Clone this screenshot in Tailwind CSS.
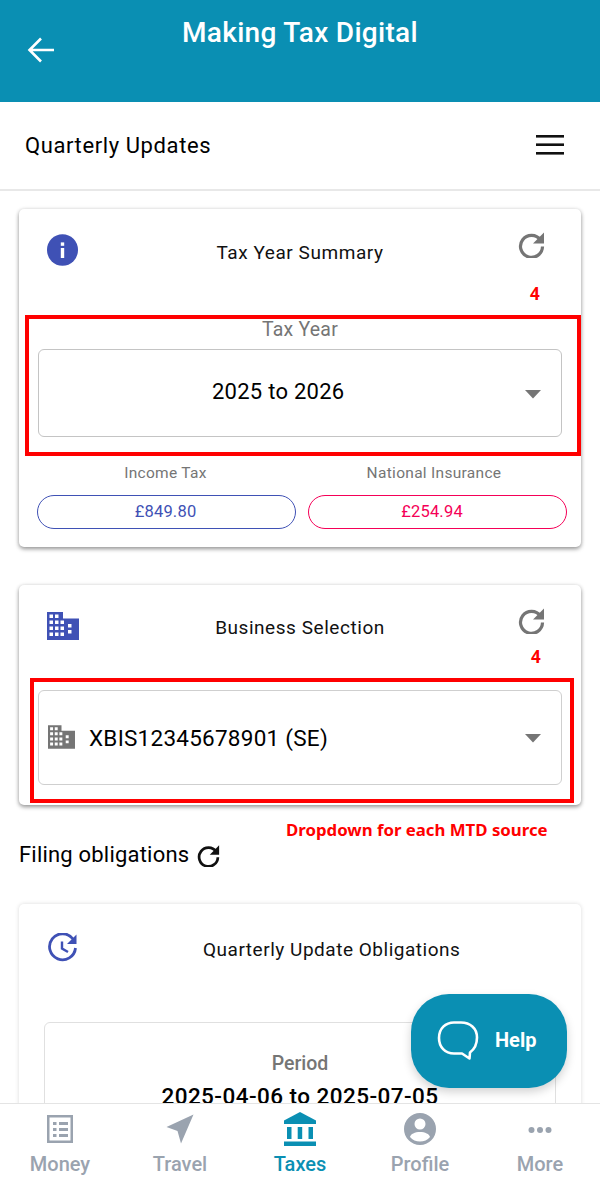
<!DOCTYPE html>
<html lang="en">
<head>
<meta charset="utf-8">
<script src="https://cdn.jsdelivr.net/npm/@tailwindcss/browser@4"></script>
<title>Making Tax Digital</title>
</head>
<body class="bg-white">
<div class="relative w-[600px] h-[1180px] overflow-hidden bg-white font-['Roboto',sans-serif] text-black">

  <header class="h-[102px] bg-[#0a8fb3] relative flex justify-center">
    <svg class="absolute left-[26px] top-[35px] w-[30px] h-[30px]" viewBox="0 0 30 30" fill="none" stroke="#fff" stroke-width="2.6"><path d="M28 15H4M15 3.500 3.500 15 15 26.500"/></svg>
    <h1 class="text-[28px] leading-[32px] font-medium tracking-[0.3px] text-white mt-[17px]">Making Tax Digital</h1>
  </header>

  <div class="h-[90px] border-b-2 border-[#e8e8e8] rounded-t-[4px] -mt-px bg-white flex items-center justify-between pl-[25px] pr-[36px]">
    <span class="text-[22px] tracking-[0.6px]">Quarterly Updates</span>
    <svg class="w-[28px] h-[20px]" viewBox="0 0 28 20" fill="#111"><rect y="0" width="28" height="2.6"/><rect y="8.400" width="28" height="2.6"/><rect y="17" width="28" height="2.6"/></svg>
  </div>

  <main class="px-[19px] pt-[18px]">
    <section class="h-[338px] bg-white rounded-[5px] shadow-[0_2px_4px_rgba(0,0,0,0.4),0_0_4px_rgba(0,0,0,0.08)] px-[18px] flex flex-col">
      <div class="h-[88px] relative flex justify-center">
        <svg class="absolute left-[10px] top-[25px] w-[31px] h-[32px]" viewBox="0 0 31 32"><ellipse cx="15.500" cy="16" rx="15.500" ry="15.800" fill="#3f51b5"/><rect x="13.800" y="14" width="3.400" height="10" fill="#fff"/><rect x="13.800" y="8.400" width="3.400" height="3.400" fill="#fff"/></svg>
        <h2 class="text-[19px] tracking-[0.55px] leading-[24px] mt-[32px] text-[#111]">Tax Year Summary</h2>
        <svg class="absolute right-[18px] top-[22px] w-[27px] h-[27px]" viewBox="0 0 27 27" fill="none"><path d="M22.500 9A11 11 0 1 0 24.500 15.500" stroke="#757575" stroke-width="3.200"/><path d="M26 1.500V12.500H15Z" fill="#757575"/></svg>
      </div>
      <div class="text-center text-[19.500px] leading-[24px] tracking-[0.2px] text-[#757575] mt-[21px]">Tax Year</div>
      <div class="h-[88px] mt-[7px] mx-px border border-[#c4c4c4] rounded-[6px] relative flex items-center">
        <span class="text-[22px] tracking-[0.25px] ml-[173px] -mt-[4px]">2025 to 2026</span>
        <svg class="absolute right-[20px] top-[39px] w-[16px] h-[10px]" viewBox="0 0 16 10"><path d="M0 1H16L8 9.500Z" fill="#757575"/></svg>
      </div>
      <div class="grid grid-cols-2 gap-x-[12px] w-[530px] mt-[26px]">
        <div class="flex flex-col items-center">
          <span class="text-[15.500px] leading-[20px] tracking-[0.3px] text-[#757575] -ml-[2px]">Income Tax</span>
          <span class="w-full h-[34px] mt-[12px] border border-[#3f51b5] rounded-full flex items-center justify-center text-[16.500px] tracking-[0.2px] text-[#3f51b5] pr-[2px]">£849.80</span>
        </div>
        <div class="flex flex-col items-center">
          <span class="text-[15.500px] leading-[20px] tracking-[0.3px] text-[#757575] -ml-[7px]">National Insurance</span>
          <span class="w-full h-[34px] mt-[12px] border border-[#f50057] rounded-full flex items-center justify-center text-[16.500px] tracking-[0.2px] text-[#f50057] pr-[11px]">£254.94</span>
        </div>
      </div>
    </section>

    <section class="h-[220px] mt-[38px] bg-white rounded-[5px] shadow-[0_2px_4px_rgba(0,0,0,0.4),0_0_4px_rgba(0,0,0,0.08)] px-[18px] flex flex-col">
      <div class="h-[105px] relative flex justify-center">
        <svg class="absolute left-[9.500px] top-[27px] w-[32px] h-[28px]" viewBox="0 0 32 28" fill="#3f51b5" fill-rule="evenodd"><path d="M0 0H16V6.500H32V28H0ZM2.500 2.500v3.500h3.500V2.500ZM8 2.500v3.500h3.500V2.500ZM2.500 8.500v3.500h3.500V8.500ZM8 8.500v3.500h3.500V8.500ZM2.500 14.500v3.500h3.500v-3.500ZM8 14.500v3.500h3.500v-3.500ZM2.500 20.500v3.500h3.500v-3.500ZM8 20.500v3.500h3.500v-3.500ZM13.500 8.500v3.500h3.500V8.500ZM13.500 14.500v3.500h3.500v-3.500ZM13.500 20.500v3.500h3.500v-3.500ZM21 12v3.500h3.500V12ZM21 18v3.500h3.500V18Z"/></svg>
        <h2 class="text-[19px] tracking-[0.55px] leading-[24px] mt-[31px] text-[#111]">Business Selection</h2>
        <svg class="absolute right-[18px] top-[22px] w-[27px] h-[27px]" viewBox="0 0 27 27" fill="none"><path d="M22.500 9A11 11 0 1 0 24.500 15.500" stroke="#757575" stroke-width="3.200"/><path d="M26 1.500V12.500H15Z" fill="#757575"/></svg>
      </div>
      <div class="h-[95px] mx-px border border-[#cfcfcf] rounded-[6px] relative flex items-center pl-[9px]">
        <svg class="w-[27px] h-[24px] -mt-[2px]" viewBox="0 0 32 28" fill="#757575" fill-rule="evenodd"><path d="M0 0H16V6.500H32V28H0ZM2.500 2.500v3.500h3.500V2.500ZM8 2.500v3.500h3.500V2.500ZM2.500 8.500v3.500h3.500V8.500ZM8 8.500v3.500h3.500V8.500ZM2.500 14.500v3.500h3.500v-3.500ZM8 14.500v3.500h3.500v-3.500ZM2.500 20.500v3.500h3.500v-3.500ZM8 20.500v3.500h3.500v-3.500ZM13.500 8.500v3.500h3.500V8.500ZM13.500 14.500v3.500h3.500v-3.500ZM13.500 20.500v3.500h3.500v-3.500ZM21 12v3.500h3.500V12ZM21 18v3.500h3.500V18Z"/></svg>
        <span class="text-[22.500px] tracking-[0.25px] ml-[14px] mt-[2px]">XBIS12345678901 (SE)</span>
        <svg class="absolute right-[20px] top-[42px] w-[16px] h-[10px]" viewBox="0 0 16 10"><path d="M0 1H16L8 9.500Z" fill="#757575"/></svg>
      </div>
    </section>

    <div class="flex items-center mt-[35px] h-[28px]">
      <span class="text-[22px] tracking-[0.2px]">Filing obligations</span>
      <svg class="w-[23px] h-[23px] ml-[8px] mt-[2px]" viewBox="0 0 27 27" fill="none"><path d="M22.500 9A11 11 0 1 0 24.500 15.500" stroke="#111" stroke-width="3.200"/><path d="M26 1.500V12.500H15Z" fill="#111"/></svg>
    </div>

    <section class="h-[300px] mt-[36px] bg-white rounded-[5px] shadow-[0_0_4px_rgba(0,0,0,0.15)] px-[25px] flex flex-col">
      <div class="h-[118px] relative">
        <svg class="absolute left-[4px] top-[29px] w-[30px] h-[30px]" viewBox="0 0 30 30" fill="none"><path d="M25 6A13 13 0 1 0 27.500 15" stroke="#3f51b5" stroke-width="2.800"/><path d="M28.500 1.500V11H19Z" fill="#3f51b5"/><path d="M14 8.500V15.500L20 19" stroke="#3f51b5" stroke-width="2.400"/></svg>
        <h2 class="text-[19px] tracking-[0.52px] leading-[24px] pt-[34px] pl-[159px] text-[#111]">Quarterly Update Obligations</h2>
      </div>
      <div class="flex-1 border border-[#e0e0e0] rounded-t-[6px] flex flex-col items-center">
        <span class="text-[19.500px] font-medium leading-[24px] text-[#757575] mt-[29px]">Period</span>
        <span class="text-[22.500px] font-medium leading-[28px] tracking-[0.45px] text-black mt-[6px]">2025-04-06 to 2025-07-05</span>
      </div>
    </section>
  </main>

  <!-- review annotations over the screenshot -->
  <div class="absolute left-[25px] top-[315px] w-[556px] h-[141px] border-[4px] border-[#ff0000]"></div>
  <div class="absolute left-[30px] top-[678px] w-[544px] h-[125px] border-[4px] border-[#ff0000]"></div>
  <span class="absolute left-[530px] top-[283px] text-[17px] leading-[22px] font-bold text-[#ff0000] font-['Noto_Sans',sans-serif]">4</span>
  <span class="absolute left-[531px] top-[646px] text-[17px] leading-[22px] font-bold text-[#ff0000] font-['Noto_Sans',sans-serif]">4</span>
  <span class="absolute left-[286px] top-[819px] text-[16.800px] leading-[22px] font-bold text-[#ff0000] font-['Noto_Sans',sans-serif] whitespace-nowrap">Dropdown for each MTD source</span>

  <!-- floating help button -->
  <div class="absolute left-[411px] top-[994px] w-[156px] h-[94px] rounded-[38px] bg-[#0a8fb3] shadow-[0_4px_10px_rgba(0,0,0,0.18)] flex items-center pl-[26px]">
    <svg class="w-[42px] h-[42px]" viewBox="0 0 42 42" fill="none"><path d="M17 2.500H24C33 2.500 40 8 40 17.500 40 25 37 29.500 33 32.500L32.500 38.500 25 33.500H17C8 33.500 2 27 2 18 2 8.500 8.500 2.500 17 2.500Z" stroke="#fff" stroke-width="2.600" stroke-linejoin="round"/></svg>
    <span class="text-[20px] font-bold text-white ml-[16px] -mt-[2px]">Help</span>
  </div>

  <!-- bottom navigation -->
  <nav class="absolute left-0 bottom-0 w-full h-[77px] bg-white border-t border-[#e4e4e4] grid grid-cols-5 text-[#9aa3af]">
    <div class="flex flex-col items-center">
      <svg class="w-[28px] h-[30px] mt-[10px]" viewBox="0 0 28 30" fill="currentColor" fill-rule="evenodd"><path d="M1 1H27V29H1ZM3.500 3.500V26.500H24.500V3.500ZM7 8H10.500V11H7ZM13 8H22V11H13ZM7 14H10.500V17H7ZM13 14H22V17H13ZM7 20H10.500V23H7ZM13 20H22V23H13Z"/></svg>
      <span class="text-[20px] font-medium leading-[24px] mt-[8px]">Money</span>
    </div>
    <div class="flex flex-col items-center">
      <svg class="w-[28px] h-[30px] mt-[10px]" viewBox="0 0 28 30" fill="currentColor"><path d="M27.500 0.500 15 29.500 11.500 17 0.500 13Z"/></svg>
      <span class="text-[20px] font-medium leading-[24px] mt-[8px]">Travel</span>
    </div>
    <div class="flex flex-col items-center text-[#0a8fb3]">
      <svg class="w-[32px] h-[34px] mt-[8px]" viewBox="0 0 32 34" fill="currentColor"><path d="M16 0 32 8.500V12H0V8.500Z"/><rect x="3" y="15" width="4.500" height="12"/><rect x="13.700" y="15" width="4.500" height="12"/><rect x="24.500" y="15" width="4.500" height="12"/><rect x="0" y="29.500" width="32" height="4.500"/></svg>
      <span class="text-[20px] font-medium leading-[24px] mt-[6px]">Taxes</span>
    </div>
    <div class="flex flex-col items-center">
      <svg class="w-[32px] h-[32px] mt-[9px]" viewBox="0 0 32 32" fill="currentColor" fill-rule="evenodd"><path d="M16 0A16 16 0 1 1 16 32 16 16 0 0 1 16 0ZM16 5.500A5.500 5.500 0 1 0 16 16.500 5.500 5.500 0 0 0 16 5.500ZM16 19C11 19 6.500 21 6 24C8.500 27 12 28.500 16 28.500S23.500 27 26 24C25.500 21 21 19 16 19Z"/></svg>
      <span class="text-[20px] font-medium leading-[24px] mt-[7px]">Profile</span>
    </div>
    <div class="flex flex-col items-center">
      <svg class="w-[24px] h-[8px] mt-[22px]" viewBox="0 0 24 8" fill="currentColor"><circle cx="3.500" cy="4" r="3"/><circle cx="12" cy="4" r="3"/><circle cx="20.500" cy="4" r="3"/></svg>
      <span class="text-[20px] font-medium leading-[24px] mt-[18px]">More</span>
    </div>
  </nav>
</div>
</body>
</html>
